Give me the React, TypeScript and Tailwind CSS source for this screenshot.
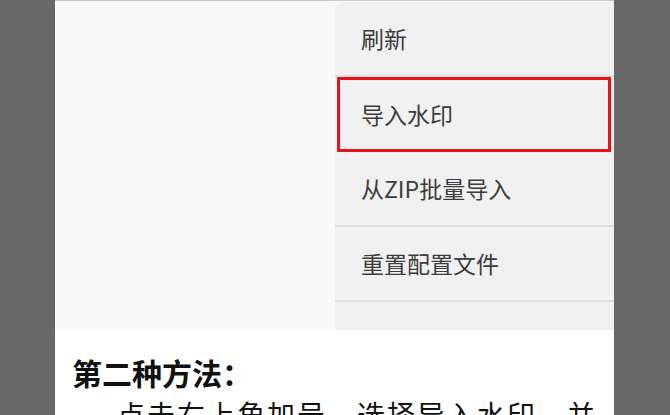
const MENU_ITEMS = ['刷新', '导入水印', '从ZIP批量导入', '重置配置文件']

const FONT = '"Noto Sans CJK SC", "Noto Sans", sans-serif'

function App() {
  return (
    <div
      className="flex h-[415px] w-[670px] overflow-hidden bg-[#686868]"
      style={{ fontFamily: FONT }}
    >
      <div className="w-[55px] shrink-0 bg-[#686868]" />

      <div className="flex w-[559px] shrink-0 flex-col bg-white">
        <div className="flex h-[330px] shrink-0 border-t border-[#c9c9c9] bg-[#f8f8f8]">
          <div className="flex-1" />
          <ul className="mt-[1px] w-[279px] shrink-0 rounded-tl-lg bg-[#f1f1f1]">
            {MENU_ITEMS.map((item, index) => (
              <li
                className={
                  index === 1
                    ? 'ml-[2px] mr-[3px] flex h-[75px] items-center border-[3px] border-[#e3151b] pl-[21px] text-[23px] text-[#3c3c3c]'
                    : 'flex h-[75px] items-center border-b-2 border-[#dedede] pl-[26px] text-[23px] text-[#3c3c3c]'
                }
                key={item}
              >
                {item}
              </li>
            ))}
          </ul>
        </div>

        <div className="px-[17px] pt-[21px] leading-[42px] text-[#111]">
          <h2 className="text-[30px] font-bold">第二种方法：</h2>
          <p className="pl-[45px] text-[28px] tracking-[2px]">
            点击右上角加号，选择导入水印，并
          </p>
        </div>
      </div>

      <div className="flex-1 bg-[#686868]" />
    </div>
  )
}

export default App
